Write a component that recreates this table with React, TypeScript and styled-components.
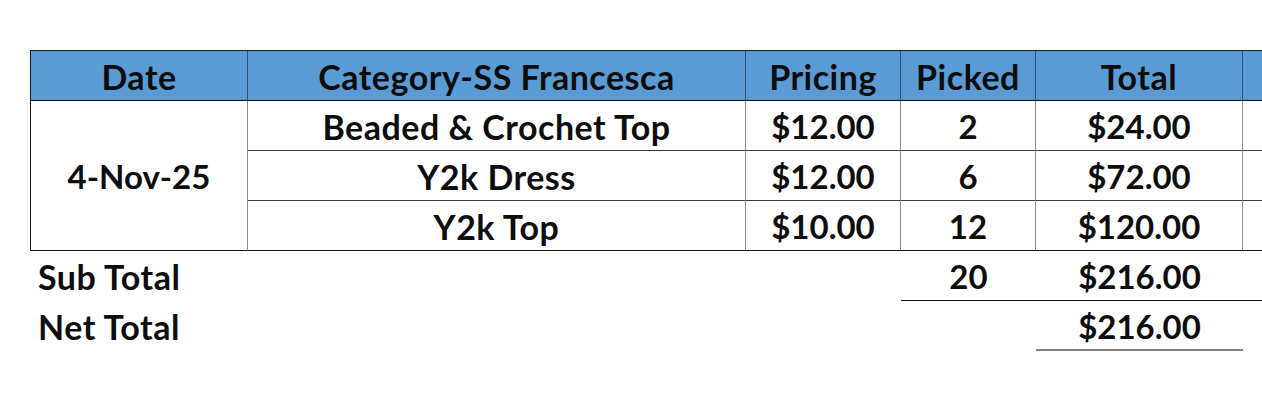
import React from "react";
import styled, { createGlobalStyle, css } from "styled-components";

const GlobalStyle = createGlobalStyle`
  html, body { margin: 0; padding: 0; background: #ffffff; overflow: hidden; }
  body { font-family: Lato, "Open Sans", sans-serif; }
`;

const Page = styled.div`
  width: 1262px;
  height: 402px;
  box-sizing: border-box;
  padding: 50px 0 0 30px;
  color: #0d0d0d;
  font-weight: 700;
  font-size: 33px;
`;

const cols = "217px 498px 155px 135px 207px 1fr";

const wordStyle = css`
  font-size: 34px;
  letter-spacing: 0.5px;
`;

const Table = styled.div`
  display: grid;
  grid-template-columns: ${cols};
  grid-auto-rows: 50px;
  border-top: 1px solid #1a1a1a;
  border-left: 1px solid #1a1a1a;
`;

const Cell = styled.div<{ $head?: boolean; $last?: boolean; $span?: number; $edge?: boolean; $word?: boolean }>`
  box-sizing: border-box;
  display: flex;
  align-items: center;
  justify-content: center;
  padding-top: 1px;
  white-space: nowrap;
  background: ${(p) => (p.$head ? "#5b9bd5" : "#ffffff")};
  border-right: ${(p) => (p.$edge ? "none" : p.$head ? "1px solid #2f4f6f" : "1px solid #8c8c8c")};
  border-bottom: 1px solid ${(p) => (p.$last || p.$head ? "#141414" : "#3c3c3c")};
  ${(p) => (p.$span ? `grid-row: span ${p.$span};` : "")}
  ${(p) => (p.$word ? wordStyle : "")}
`;

const Summary = styled.div`
  display: grid;
  grid-template-columns: ${cols};
  grid-auto-rows: 50px;
  margin-left: 1px;
`;

const Label = styled.div`
  grid-column: 1 / span 3;
  display: flex;
  align-items: center;
  padding: 1px 0 0 7px;
  box-sizing: border-box;
  ${wordStyle}
`;

const SumCell = styled.div<{ $line?: "dark" | "gray" | "none"; $col: number }>`
  grid-column: ${(p) => p.$col};
  box-sizing: border-box;
  display: flex;
  align-items: center;
  justify-content: center;
  padding-top: 1px;
  white-space: nowrap;
  border-bottom: ${(p) =>
    p.$line === "dark" ? "1px solid #141414" : p.$line === "gray" ? "2px solid #7f7f7f" : "none"};
`;

const headers = ["Date", "Category-SS Francesca", "Pricing", "Picked", "Total"];

const rows = [
  { cat: "Beaded & Crochet Top", price: "$12.00", picked: "2", total: "$24.00" },
  { cat: "Y2k Dress", price: "$12.00", picked: "6", total: "$72.00" },
  { cat: "Y2k Top", price: "$10.00", picked: "12", total: "$120.00" },
];

export default function App() {
  return (
    <>
      <GlobalStyle />
      <Page>
        <Table>
          {headers.map((h) => (
            <Cell key={h} $head $word>
              {h}
            </Cell>
          ))}
          <Cell $head $edge />
          {rows.map((r, i) => {
            const last = i === rows.length - 1;
            return (
              <React.Fragment key={r.cat}>
                {i === 0 && (
                  <Cell $span={3} $last>
                    4-Nov-25
                  </Cell>
                )}
                <Cell $last={last} $word>
                  {r.cat}
                </Cell>
                <Cell $last={last}>{r.price}</Cell>
                <Cell $last={last}>{r.picked}</Cell>
                <Cell $last={last}>{r.total}</Cell>
                <Cell $last={last} $edge />
              </React.Fragment>
            );
          })}
        </Table>
        <Summary>
          <Label>Sub Total</Label>
          <SumCell $col={4} $line="dark">20</SumCell>
          <SumCell $col={5} $line="dark">$216.00</SumCell>
          <SumCell $col={6} $line="dark" />
          <Label>Net Total</Label>
          <SumCell $col={5} $line="gray">$216.00</SumCell>
        </Summary>
      </Page>
    </>
  );
}
